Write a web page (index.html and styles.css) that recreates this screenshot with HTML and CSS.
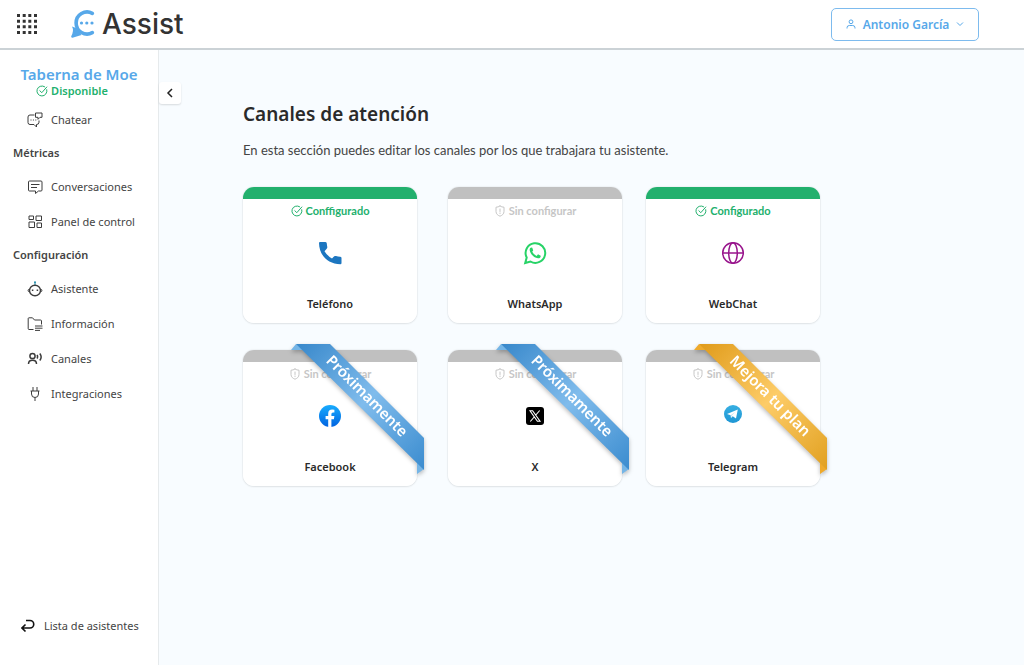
FILE: index.html
```html
<!DOCTYPE html>
<html lang="es">
<head>
<meta charset="utf-8">
<meta name="viewport" content="width=device-width, initial-scale=1">
<title>Assist – Canales de atención</title>
<link rel="stylesheet" href="styles.css">
</head>
<body>
<svg class="defs" aria-hidden="true">
  <defs>
    <symbol id="check" viewBox="0 0 12 12"><path d="M10.8 4.7A5 5 0 1 1 8.6 1.7M3.8 5.7l2 2 5-5.7" fill="none" stroke="currentColor" stroke-linecap="round" stroke-linejoin="round"/></symbol>
    <symbol id="shield" viewBox="0 0 12 12"><path d="M6 1C4.800 2 3.200 2 2 2.200V6.500C2 9 4 10.500 6 11.200 8 10.500 10 9 10 6.500V2.200C8.800 2 7.200 2 6 1ZM6 4v2.500M6 8v.5" fill="none" stroke="currentColor" stroke-linecap="round" stroke-linejoin="round"/></symbol>
    <linearGradient id="blue" x1="0" y1="0" x2="1" y2="1"><stop offset="0" stop-color="#3888cb"/><stop offset=".5" stop-color="#80bcec"/><stop offset="1" stop-color="#3b8ccf"/></linearGradient>
    <linearGradient id="gold" x1="0" y1="0" x2="1" y2="1"><stop offset="0" stop-color="#e09b1a"/><stop offset=".5" stop-color="#fdcc68"/><stop offset="1" stop-color="#e1a020"/></linearGradient>
    <linearGradient id="fb" x1="0" y1="0" x2="0" y2="1"><stop offset="0" stop-color="#18acfe"/><stop offset="1" stop-color="#0163e0"/></linearGradient>
    <linearGradient id="tg" x1="0" y1="0" x2="0" y2="1"><stop offset="0" stop-color="#37afe2"/><stop offset="1" stop-color="#1e96d4"/></linearGradient>
  </defs>
</svg>

<header class="topbar">
  <button class="apps" type="button" aria-label="Aplicaciones">
    <svg width="20" height="20" viewBox="0 0 20 20"><path d="M1.500 0v20M7.200 0v20M12.800 0v20M18.500 0v20" stroke="#333" stroke-width="3" stroke-dasharray="3 2.667"/></svg>
  </button>
  <a class="brand" href="#">
    <svg width="26" height="30" viewBox="0 0 26 30"><path d="M22.300 4.300A11 11 0 1 0 22.300 23.700" fill="none" stroke="#57a8e9" stroke-width="3.600" stroke-linecap="round"/><path d="M2 17.500Q4.300 21.500 1.200 27.300Q.8 28.800 2.500 28.700L11.500 26 6 19Z" fill="#57a8e9"/><g fill="#57a8e9"><circle cx="11.500" cy="14" r="1.600"/><circle cx="16.800" cy="14" r="1.600"/><circle cx="22" cy="14" r="1.600"/></g></svg>
    <span>Assist</span>
  </a>
  <button class="user" type="button">
    <svg width="10" height="10" viewBox="0 0 10 10" fill="none" stroke="currentColor"><circle cx="5" cy="2.800" r="1.900"/><path d="M1 9.500V8.800Q1 6.500 3.300 6.500H6.700Q9 6.500 9 8.800V9.500"/></svg>
    <span>Antonio García</span>
    <svg width="8" height="6" viewBox="0 0 8 6" fill="none" stroke="currentColor"><path d="M1 1.500 4 4.500 7 1.500"/></svg>
  </button>
</header>

<div class="shell">
  <aside class="sidebar">
    <h2 class="tenant">Taberna de Moe</h2>
    <p class="available"><svg width="12" height="12"><use href="#check"/></svg>Disponible</p>
    <nav class="menu">
      <a class="item" href="#"><svg width="16" height="16" viewBox="0 0 16 16"><path d="M7.500 3H3Q1 3 1 5v5.500q0 2 2 2h4l2.500 2.500v-2.500q2.500 0 2.500-2.300V8.500M8.500 1H15v4.300H13L11 7.300V5.300H8.500Z"/><path d="M3.500 8h1M5.900 8h1M8.300 8h1"/></svg>Chatear</a>
      <h3 class="group">Métricas</h3>
      <a class="item" href="#"><svg width="16" height="16" viewBox="0 0 16 16"><path d="M2.500 2h11.500q1 0 1 1v8q0 1-1 1H11.500L8.500 14.500V12h-6q-1 0-1-1V3q0-1 1-1ZM4 5.500h8.500M4 8.500h6"/></svg>Conversaciones</a>
      <a class="item" href="#"><svg width="16" height="16" viewBox="0 0 16 16"><path d="M2 2h4.500v3.500H2ZM9 2h5.500v4.500H9ZM2 8h5.500v5.500H2ZM10 9h4.500v4.500h-4.500Z"/></svg>Panel de control</a>
      <h3 class="group">Configuración</h3>
      <a class="item" href="#"><svg width="16" height="16" viewBox="0 0 16 16"><path d="M8 4V2" stroke="#1b8aa8"/><circle cx="8" cy="1.200" r="1" fill="#1b8aa8" stroke="none"/><ellipse cx="8" cy="9.500" rx="5.500" ry="5.200" stroke-width="1.400"/><path d="M2 8.200C.8 8.500.8 10.500 2 10.800M14 8.200c1.200.3 1.200 2.300 0 2.600"/><path d="M5.600 8.500v1.500M10.400 8.500v1.500" stroke-width="1.500"/></svg>Asistente</a>
      <a class="item" href="#"><svg width="16" height="16" viewBox="0 0 16 16"><path d="M6.500 13.500H2Q1.200 13.500 1.200 12.500V2.500Q1.200 1.800 2 1.800H5.500L7.500 4H13.500Q14.500 4 14.500 5V8.500M8 10h7.500M8 12.200h7.500M8 14.400h5"/></svg>Información</a>
      <a class="item" href="#"><svg width="16" height="16" viewBox="0 0 16 16" stroke-width="1.500"><circle cx="5.500" cy="5" r="2.600"/><path d="M1.500 13Q1.500 9.300 5.500 9.300T9.500 13M10 4Q11.200 5.800 10 7.500M12.800 2.500Q15.500 6 12.800 9.500"/></svg>Canales</a>
      <a class="item" href="#"><svg width="16" height="16" viewBox="0 0 16 16"><path d="M6 1v4M10 1v4M3.500 5h9M4.500 5v3Q4.500 11.500 8 11.500T11.500 8V5M8 11.500V15"/></svg>Integraciones</a>
    </nav>
    <a class="back" href="#"><svg width="14" height="14" viewBox="0 0 14 14"><path d="M5 1.500H9A3.700 3.700 0 0 1 9 9H1.500M4.500 5.500 1 9 4.500 12.500"/></svg>Lista de asistentes</a>
  </aside>

  <main class="content">
    <button class="collapse" type="button" aria-label="Contraer menú"><svg width="8" height="10" viewBox="0 0 8 10"><path d="M6 1 2 5 6 9" fill="none" stroke="#222" stroke-width="1.500"/></svg></button>
    <h1 class="title">Canales de atención</h1>
    <p class="intro">En esta sección puedes editar los canales por los que trabajara tu asistente.</p>
    <div class="channels">
      <article class="card on">
        <p class="status"><svg width="12" height="12"><use href="#check"/></svg>Conffigurado</p>
        <svg class="logo" viewBox="0 0 24 24"><path d="M1 2Q1 1 2 1H7.500Q8.800 1 8.800 2.500 9 4.500 9.300 6Q9.400 7 8.700 7.700L6.500 10.200Q9.500 15 14 17.500L16.200 15.300Q17 14.800 18 15.100 20 15.600 22 15.700 23.500 15.800 23.500 17V22Q23.500 23.200 22.400 23.200C10 23.200 1 14 1 2Z" fill="#1c76c0"/></svg>
        <h2 class="name">Teléfono</h2>
      </article>
      <article class="card">
        <p class="status"><svg width="12" height="12"><use href="#shield"/></svg>Sin configurar</p>
        <svg class="logo" viewBox="0 0 24 24"><path d="M2.200 22 3.700 16.500A9.800 9.800 0 1 1 7.500 20.500Z" fill="none" stroke="#27d367" stroke-width="2"/><path d="M8.500 6.500C7 6.600 6.500 8 6.700 9.300 7.300 13 11 17 15 17.300 17 17.300 17.800 16 17.700 14.700L15 13.300 13.700 14.900Q10.500 13.500 9.200 10.700L10.200 9.400 9.300 6.800Z" fill="#27d367"/></svg>
        <h2 class="name">WhatsApp</h2>
      </article>
      <article class="card on">
        <p class="status"><svg width="12" height="12"><use href="#check"/></svg>Configurado</p>
        <svg class="logo" viewBox="0 0 24 24" fill="none" stroke="#98148c" stroke-width="1.500"><circle cx="12" cy="12" r="10.300"/><ellipse cx="12" cy="12" rx="4.300" ry="10.300"/><path d="M2 12h20"/></svg>
        <h2 class="name">WebChat</h2>
      </article>
      <article class="card">
        <p class="status"><svg width="12" height="12"><use href="#shield"/></svg>Sin configurar</p>
        <svg class="logo" viewBox="0 0 24 24"><circle cx="12" cy="12" r="11" fill="url(#fb)"/><path d="M10.200 22.900V15.200H7.600V12h2.600V9.800C10.200 7 11.600 5.600 14.200 5.600L16.400 5.800V8.500H15Q13.400 8.500 13.400 10V12h3L15.900 15.200H13.400V22.900Z" fill="#fff"/></svg>
        <h2 class="name">Facebook</h2>
        <svg class="ribbon blue" viewBox="0 0 182 132"><path class="fold" d="M48 6 53 0 62 6ZM174 114V130L181 125Z"/><path d="M53 0H87L181 94V126Z" fill="url(#blue)"/><text x="124" y="57" transform="rotate(45 124 52)">Próximamente</text></svg>
      </article>
      <article class="card">
        <p class="status"><svg width="12" height="12"><use href="#shield"/></svg>Sin configurar</p>
        <svg class="logo" viewBox="0 0 24 24"><rect x="3" y="3" width="18" height="18" rx="3" fill="#000"/><path d="M7 6.800H9.600L17 17.200H14.400ZM16.700 6.500 12.800 11M11.200 13 7.300 17.500" fill="none" stroke="#fff" stroke-width="1.100"/></svg>
        <h2 class="name">X</h2>
        <svg class="ribbon blue" viewBox="0 0 182 132"><path class="fold" d="M48 6 53 0 62 6ZM174 114V130L181 125Z"/><path d="M53 0H87L181 94V126Z" fill="url(#blue)"/><text x="124" y="57" transform="rotate(45 124 52)">Próximamente</text></svg>
      </article>
      <article class="card">
        <p class="status"><svg width="12" height="12"><use href="#shield"/></svg>Sin configurar</p>
        <svg class="logo" viewBox="0 0 24 24"><circle cx="12" cy="10" r="9" fill="url(#tg)"/><path d="M6 9.900 16.800 5.500 15 14.600 11.700 12.300 10 14 9.700 11.200Z" fill="#fff"/><path d="M9.700 11.200 14.500 7.700 10.600 11.700 10 14Z" fill="#bfdff0"/></svg>
        <h2 class="name">Telegram</h2>
        <svg class="ribbon gold" viewBox="0 0 182 132"><path class="fold" d="M48 6 53 0 62 6ZM174 114V130L181 125Z"/><path d="M53 0H87L181 94V126Z" fill="url(#gold)"/><text x="124" y="57" transform="rotate(45 124 52)">Mejora tu plan</text></svg>
      </article>
    </div>
  </main>
</div>
</body>
</html>
```
FILE: styles.css
```css
* { box-sizing: border-box; }
body {
  margin: 0;
  min-height: 100vh;
  display: flex;
  flex-direction: column;
  font-family: "Noto Sans", sans-serif;
  font-size: 11px;
  color: #444;
  background: #fff;
}
h1, h2, h3, p { margin: 0; }
a { color: inherit; text-decoration: none; }
button { font: inherit; color: inherit; padding: 0; border: 0; background: none; cursor: pointer; }
svg { flex: none; display: block; }
.defs { position: absolute; width: 0; height: 0; }

.topbar {
  display: flex;
  align-items: center;
  height: 50px;
  padding: 0 45px 0 17px;
  border-bottom: 2px solid #cbd2d6;
}
.brand {
  display: flex;
  align-items: center;
  gap: 6px;
  margin-left: 33px;
  font: 500 28px/32px Inter, sans-serif;
  color: #333;
}
.user {
  display: flex;
  align-items: center;
  justify-content: center;
  gap: 7px;
  width: 148px;
  height: 33px;
  margin-left: auto;
  border: 1px solid #7dbbee;
  border-radius: 5px;
  font-size: 12px;
  font-weight: 600;
  color: #57a8e9;
}

.shell { display: flex; flex: 1; }
.sidebar {
  display: flex;
  flex-direction: column;
  flex: none;
  width: 159px;
  padding: 14px 0 22px;
  border-right: 1px solid #e6eaec;
}
.tenant { font-size: 15px; line-height: 20px; font-weight: 600; text-align: center; color: #57a8e9; }
.available {
  display: flex;
  align-items: center;
  justify-content: center;
  gap: 3px;
  padding-right: 14px;
  margin-bottom: 4px;
  line-height: 14px;
  font-weight: 600;
  color: #22b06d;
}
.item { display: flex; align-items: center; gap: 8px; height: 35px; padding-left: 27px; }
.item svg, .back svg { fill: none; stroke: #3c3c3c; }
.group { padding-left: 13px; font-size: 11px; line-height: 32px; font-weight: 600; }
.back { display: flex; align-items: center; gap: 9px; height: 35px; margin-top: auto; padding-left: 21px; }
.back svg { stroke: #111; stroke-width: 1.6; }

.content { position: relative; flex: 1; min-width: 0; padding: 50px 24px 24px 84px; background: #f8fcff; }
.collapse {
  position: absolute;
  left: 0;
  top: 32px;
  display: grid;
  place-items: center;
  width: 22px;
  height: 22px;
  border-radius: 3px;
  background: #fff;
  box-shadow: 0 1px 2px #0002;
}
.title { font-size: 19px; line-height: 28px; font-weight: 600; color: #2a2a2a; }
.intro { margin-top: 12px; font: 13px/20px Lato, sans-serif; }
.channels {
  display: grid;
  grid-template-columns: 205fr 198fr 174fr;
  row-gap: 27px;
  max-width: 577px;
  margin-top: 27px;
}
.card {
  position: relative;
  display: flex;
  flex-direction: column;
  align-items: center;
  width: 174px;
  height: 136px;
  border-radius: 11px;
  background: linear-gradient(#c0c0c0 12px, #fff 12px);
  box-shadow: 0 0 2px #0002, 0 1px 2px #0001;
}
.card.on { background: linear-gradient(#22b06d 12px, #fff 12px); }
.status {
  display: flex;
  align-items: center;
  gap: 3px;
  margin-top: 16px;
  font: 700 11px/16px Lato, sans-serif;
  color: #c6c6c6;
}
.on .status { color: #22b06d; }
.logo { width: 24px; height: 24px; margin-top: 22px; }
.name { margin-top: 31px; font-size: 11px; line-height: 16px; font-weight: 600; color: #2a2a2a; }
.ribbon {
  position: absolute;
  left: 0;
  top: -6px;
  width: 182px;
  height: 132px;
  overflow: visible;
  filter: drop-shadow(0 2px 2px #0004);
}
.ribbon text { font-size: 15px; font-weight: 600; fill: #fff; text-anchor: middle; }
.blue .fold { fill: #75b5e6; }
.gold .fold { fill: #efaa2b; }
```
